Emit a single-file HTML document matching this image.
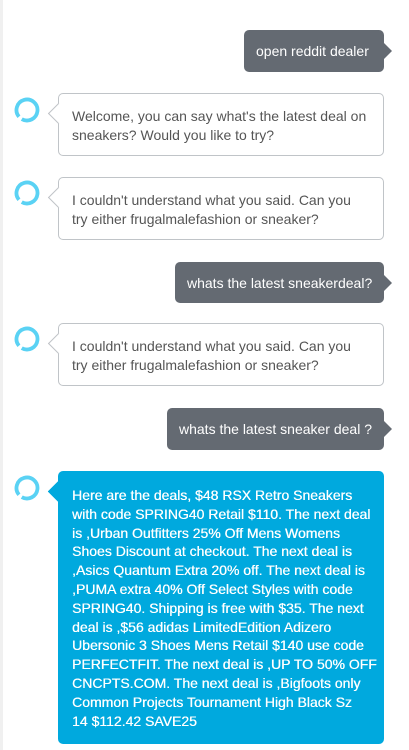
<!DOCTYPE html>
<html><head><meta charset="utf-8"><style>
*{margin:0;padding:0;box-sizing:border-box}
body{width:409px;height:750px;background:#fff;position:relative;overflow:hidden;font-family:"Liberation Sans",sans-serif;font-size:14px}
.edge{position:absolute;left:0;top:0;width:3px;height:750px;background:#f0f0f0}
.u{position:absolute;right:25px;background:#646a72;color:#fff;border-radius:5px;padding:0 12px;display:flex;align-items:center;white-space:nowrap}
.u:after{content:"";position:absolute;right:-8px;top:50%;margin-top:-8px;border-left:8px solid #646a72;border-top:8px solid transparent;border-bottom:8px solid transparent}
.a{position:absolute;left:58px;width:326px;border:1px solid #c0c4c8;border-radius:5px;background:#fff;color:#555;padding:0 13px;line-height:18.5px;white-space:nowrap}
.a:before{content:"";position:absolute;top:12px;width:14px;height:14px;background:#fff;border-left:1px solid #c0c4c8;border-bottom:1px solid #c0c4c8;transform:rotate(45deg);left:-8px}
.b{background:#00a9de;border-color:#00a9de;color:#fff;line-height:18.8px;text-shadow:0.3px 0 0 #fff}
.b:before{background:#00a9de;border-color:#00a9de}
.r{position:absolute;left:14px;width:26px;height:26px}
</style></head><body>
<div class="edge"></div>
<div class="u" style="left:244px;top:30px;height:42px">open reddit dealer</div>
<svg class="r" style="top:97px" viewBox="0 0 26 26"><path d="M4.96 19.75A10.5 10.5 0 1 1 7.75 22.09" fill="none" stroke="#5ad2f4" stroke-width="3.8"/></svg>
<div class="a" style="top:93px;height:63px;padding-top:13px">Welcome, you can say what's the latest deal on<br>sneakers? Would you like to try?</div>
<svg class="r" style="top:180px" viewBox="0 0 26 26"><path d="M4.96 19.75A10.5 10.5 0 1 1 7.75 22.09" fill="none" stroke="#5ad2f4" stroke-width="3.8"/></svg>
<div class="a" style="top:177px;height:63px;padding-top:13px">I couldn't understand what you said. Can you<br>try either frugalmalefashion or sneaker?</div>
<div class="u" style="left:175px;top:262px;height:41px">whats the latest sneakerdeal?</div>
<svg class="r" style="top:326px" viewBox="0 0 26 26"><path d="M4.96 19.75A10.5 10.5 0 1 1 7.75 22.09" fill="none" stroke="#5ad2f4" stroke-width="3.8"/></svg>
<div class="a" style="top:323px;height:63px;padding-top:13px">I couldn't understand what you said. Can you<br>try either frugalmalefashion or sneaker?</div>
<div class="u" style="left:167px;top:408px;height:42px">whats the latest sneaker deal ?</div>
<svg class="r" style="top:475px" viewBox="0 0 26 26"><path d="M4.96 19.75A10.5 10.5 0 1 1 7.75 22.09" fill="none" stroke="#5ad2f4" stroke-width="3.8"/></svg>
<div class="a b" style="top:471px;height:273px;padding-top:14px">Here are the deals, $48 RSX Retro Sneakers<br>with code SPRING40 Retail $110. The next deal<br>is ,Urban Outfitters 25% Off Mens Womens<br>Shoes Discount at checkout. The next deal is<br>,Asics Quantum Extra 20% off. The next deal is<br>,PUMA extra 40% Off Select Styles with code<br>SPRING40. Shipping is free with $35. The next<br>deal is ,$56 adidas LimitedEdition Adizero<br>Ubersonic 3 Shoes Mens Retail $140 use code<br>PERFECTFIT. The next deal is ,UP TO 50% OFF<br>CNCPTS.COM. The next deal is ,Bigfoots only<br>Common Projects Tournament High Black Sz<br>14 $112.42 SAVE25</div>
</body></html>
